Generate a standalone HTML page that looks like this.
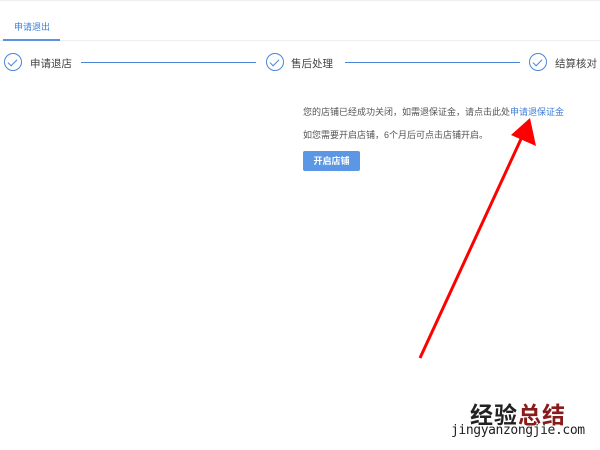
<!DOCTYPE html>
<html><head><meta charset="utf-8"><style>
body{margin:0;width:600px;height:450px;background:#fff;position:relative;overflow:hidden;font-family:"Liberation Sans","Noto Sans CJK SC",sans-serif;}
.a{position:absolute;white-space:nowrap}
.c{position:absolute;width:18px;height:18px;border:1px solid #4a86d8;border-radius:50%;box-sizing:border-box}
.c:after{content:"";position:absolute;left:5px;top:3px;width:4px;height:8px;border-right:1px solid #4a86d8;border-bottom:1px solid #4a86d8;transform:rotate(45deg)}
.l{position:absolute;height:1px;background:#4a86d8;top:62px}
</style></head><body>
<div class="a" style="left:0;top:0;width:600px;height:1px;background:#eee"></div>
<div class="a" style="left:14px;top:20px;font-size:9px;color:#3b7dd8">申请退出</div>
<div class="a" style="left:0;top:40px;width:600px;height:1px;background:#eee"></div>
<div class="a" style="left:3px;top:39px;width:57px;height:2px;background:#5b93de"></div>
<div class="c" style="left:4px;top:53px"></div>
<div class="a" style="left:30px;top:56px;font-size:10.5px;color:#444">申请退店</div>
<div class="l" style="left:81px;width:175px"></div>
<div class="c" style="left:266px;top:53px"></div>
<div class="a" style="left:291px;top:56px;font-size:10.5px;color:#444">售后处理</div>
<div class="l" style="left:345px;width:175px"></div>
<div class="c" style="left:529px;top:53px"></div>
<div class="a" style="left:555px;top:56px;font-size:10.5px;color:#444">结算核对</div>
<div class="a" style="left:303px;top:105px;font-size:9px;color:#555">您的店铺已经成功关闭，如需退保证金，请点击此处<span style="color:#3b7dd8">申请退保证金</span></div>
<div class="a" style="left:303px;top:128px;font-size:9px;color:#555">如您需要开启店铺，6个月后可点击店铺开启。</div>
<div class="a" style="left:303px;top:151px;width:57px;height:20px;background:#5b97e5;border-radius:2px;color:#fff;font-size:9px;font-weight:bold;text-align:center;line-height:20px">开启店铺</div>
<svg class="a" style="left:0;top:0" width="600" height="450"><line x1="420" y1="358" x2="521" y2="139" stroke="#f00" stroke-width="3"/><polygon points="530,118 511,135 536,146" fill="#f00"/></svg>
<div class="a" style="left:470px;top:396px;font-size:23px;font-weight:bold;color:#222;letter-spacing:1px">经验<span style="color:#8b1a1a">总结</span></div>
<div class="a" style="left:451px;top:423px;font-size:13px;color:#222;font-family:'DejaVu Sans Mono',monospace;letter-spacing:-0.4px">jingyanzongjie.com</div>
</body></html>
